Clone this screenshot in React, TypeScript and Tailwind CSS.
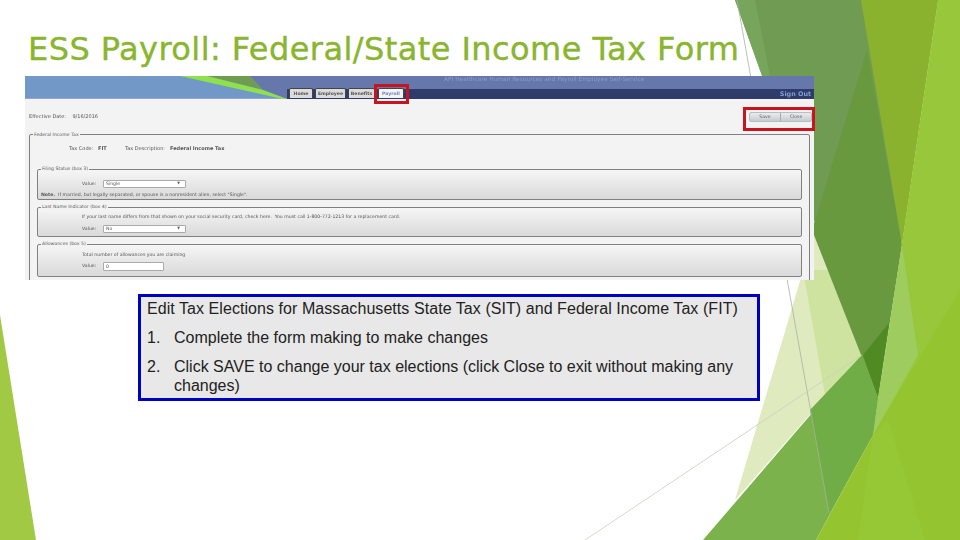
import React from 'react';

function Decor() {
  return (
    <svg className="absolute inset-0" width="960" height="540" viewBox="0 0 960 540">
      {/* bottom left wedge */}
      <polygon points="0,315 36,540 0,540" fill="#a2c944" />
      {/* pale facets */}
      <polygon points="818,220 862,355 735,500" fill="#dfeabf" />
      <polygon points="803,270 832,270 862,355 825,395" fill="#cfe3a0" />
      {/* dark facet */}
      <polygon points="735,0 938,0 878,398" fill="#6f9c52" />
      <polygon points="735,0 755,0 770,76 762,76" fill="#78a55c" />
      <polygon points="867,50 812,230 878,398 902,245" fill="#68993e" />
      <polygon points="861,0 938,0 902,245" fill="#8ab22e" />
      <polygon points="863,355 889,323 878,398" fill="#4f8a23" />
      {/* right lime */}
      <polygon points="938,0 960,0 960,540 858,540" fill="#98c73b" />
      <polygon points="902,245 918,355 873,435 878,398" fill="#9fcc5f" />
      {/* big diagonal */}
      <polygon points="703,540 862,355 878,398 873,435 816,540" fill="#7bb24c" />
      <polygon points="810,410 862,355 878,398 873,435 829,513" fill="#70ad46" />
      <polygon points="960,290 960,540 816,540 873,435" fill="#94c530" />
      <polygon points="873,435 888,420 925,540 858,540" fill="#96c735" />
      {/* thin lines */}
      <line x1="737" y1="0" x2="829" y2="513" stroke="#a9b0a4" strokeWidth="0.8" />
      <line x1="585" y1="540" x2="862" y2="355" stroke="#c9cfc2" strokeWidth="0.8" />
    </svg>
  );
}

function Tab({ label, active, width }: { label: string; active?: boolean; width: string }) {
  return (
    <div
      className={`h-[10px] ${width} text-center rounded-t-[2px] border border-b-0 border-[#444] text-[4.6px] leading-[9px] font-bold ${
        active ? 'bg-[#f3f3f3] text-[#6a86b8]' : 'bg-[#dcdcdc] text-[#555]'
      }`}
    >
      {label}
    </div>
  );
}

function Box({ legend, className, children }: { legend: string; className: string; children: React.ReactNode }) {
  return (
    <div className={`relative border border-[#808080] rounded-[2px] bg-gradient-to-b from-[#f6f6f6] to-[#d9d9d9] ${className}`}>
      <div className="absolute left-[3px] top-[-5px] px-[1px] bg-[#f3f3f3] text-[4.64px] leading-[8px] text-[#555]">{legend}</div>
      {children}
    </div>
  );
}

function Dropdown({ value }: { value: string }) {
  return (
    <div className="w-[83px] h-[8px] border border-[#aaa] rounded-[1px] bg-white flex items-center justify-between px-[2px] text-[4.6px] text-[#555]">
      <span>{value}</span>
      <span className="text-[3.5px] pr-[3px]">▼</span>
    </div>
  );
}

function Screenshot() {
  return (
    <div className="relative w-[789px] h-[204px] font-['DejaVu_Sans',sans-serif]">
      <div className="h-full overflow-hidden bg-[#f3f3f3] text-[#555]">
        <div className="blur-[0.3px]">
          {/* header band */}
          <div className="relative h-[23px] bg-[#7298c8] border-b border-[#93a6d0]">
            <svg className="absolute inset-0" width="789" height="23" viewBox="0 0 789 23">
              <polygon points="225,0 789,0 789,23 262,23 238,14" fill="#6577ab" />
              <polygon points="262,13 789,13 789,23 262,23" fill="#2f3b68" />
              <polygon points="182,0 225,0 238,14" fill="#6f9c52" />
              <polygon points="155,0 182,0 238,14 262,23 258,23" fill="#8fe04e" />
            </svg>
            <div className="absolute left-[419px] top-0 text-[5.9px] leading-[6px] text-[#8b9ccb]">
              API Healthcare Human Resources and Payroll Employee Self-Service
            </div>
            <div className="absolute right-[3px] top-[13px] text-[6.4px] leading-[10px] font-bold text-[#7f9fd6]">Sign Out</div>
            <div className="absolute left-[264px] bottom-0 flex gap-[2px]">
              <Tab label="Home" width="w-[24px]" />
              <Tab label="Employee" width="w-[31px]" />
              <Tab label="Benefits" width="w-[27px]" />
              <div className="ml-[1px]">
                <Tab label="Payroll" width="w-[26px]" active />
              </div>
            </div>
          </div>

          <div className="flex items-center justify-between h-[35px] pl-[4px] pr-[2px] pt-[1px]">
            <div className="text-[5px]">Effective Date: &nbsp; &nbsp;9/16/2016</div>
            <div className="flex h-[10px] w-[63px] rounded-[2px] border border-[#bbb] bg-gradient-to-b from-[#e8ecef] to-[#c4ccd2] text-[4.6px] leading-[8px] text-[#666]">
              <div className="flex-1 text-center border-r border-[#aaa]">Save</div>
              <div className="flex-1 text-center">Close</div>
            </div>
          </div>

          {/* federal income tax fieldset */}
          <div className="relative ml-[4px] w-[781px] h-[160px] border border-[#808080] rounded-[2px] px-[7px]">
            <div className="absolute left-[3px] top-[-4px] px-[1px] bg-[#f3f3f3] text-[4.64px] leading-[8px]">Federal Income Tax</div>
            <div className="flex pl-[32px] pt-[9px] text-[5px] leading-[8px]">
              <span className="w-[29px]">Tax Code:</span>
              <b className="w-[27px]">FIT</b>
              <span className="w-[45px]">Tax Description:</span>
              <b>Federal Income Tax</b>
            </div>
            <Box legend="Filing Status (box 3)" className="mt-[17px] h-[31px]">
              <div className="flex items-center gap-[3px] pl-[44px] pt-[10px] text-[4.64px]">
                <span className="w-[18px]">Value:</span>
                <Dropdown value="Single" />
              </div>
              <div className="pl-[3px] pt-[3px] text-[4.64px] leading-[7px]">
                <b>Note.</b> &nbsp;If married, but legally separated, or spouse is a nonresident alien, select "Single".
              </div>
            </Box>
            <Box legend="Last Name Indicator (box 4)" className="mt-[7px] h-[30px]">
              <div className="pl-[44px] pt-[5px] text-[4.64px] leading-[7px]">
                If your last name differs from that shown on your social security card, check here. &nbsp;You must call 1-800-772-1213 for a replacement card.
              </div>
              <div className="flex items-center gap-[3px] pl-[44px] pt-[5px] text-[4.64px]">
                <span className="w-[18px]">Value:</span>
                <Dropdown value="No" />
              </div>
            </Box>
            <Box legend="Allowances (box 5)" className="mt-[7px] h-[33px]">
              <div className="pl-[44px] pt-[6px] text-[4.64px] leading-[7px]">Total number of allowances you are claiming</div>
              <div className="flex items-center gap-[3px] pl-[44px] pt-[4px] text-[4.64px]">
                <span className="w-[18px]">Value:</span>
                <div className="w-[61px] h-[9px] rounded-[1px] border border-[#aaa] bg-white pl-[2px] leading-[7px]">0</div>
              </div>
            </Box>
          </div>
        </div>
      </div>

      {/* red highlights */}
      <div className="absolute left-[349px] top-[8px] w-[35px] h-[20px] border-[3px] border-[#c8141e]" />
      <div className="absolute left-[718px] top-[31px] w-[72px] h-[24px] border-[3px] border-[#c8141e]" />
    </div>
  );
}

export default function App() {
  return (
    <div className="relative w-[960px] h-[540px] overflow-hidden bg-white">
      <Decor />
      <div className="relative flex flex-col">
        <h1 className="pl-[28px] pt-[29px] h-[76px] text-[32px] leading-[40px] tracking-[0.43px] text-[#8ab52f] [-webkit-text-stroke:0.4px_#8ab52f] font-['DejaVu_Sans',sans-serif]">
          ESS Payroll: Federal/State Income Tax Form
        </h1>
        <div className="pl-[25px]">
          <Screenshot />
        </div>
        <div className="ml-[138px] mt-[14px] w-[622px] h-[107px] border-[3px] border-[#0000c0] bg-[#e8e8e8] pl-[6px] pt-[2px] text-[16px] leading-[19px] text-[#222] font-['Liberation_Sans',sans-serif]">
          <div className="tracking-[0.06px]">Edit Tax Elections for Massachusetts State Tax (SIT) and Federal Income Tax (FIT)</div>
          <div className="flex mt-[10px]">
            <span className="w-[27px] shrink-0">1.</span>
            <span>Complete the form making to make changes</span>
          </div>
          <div className="flex mt-[10px]">
            <span className="w-[27px] shrink-0">2.</span>
            <span>Click SAVE to change your tax elections (click Close to exit without making any changes)</span>
          </div>
        </div>
      </div>
    </div>
  );
}
